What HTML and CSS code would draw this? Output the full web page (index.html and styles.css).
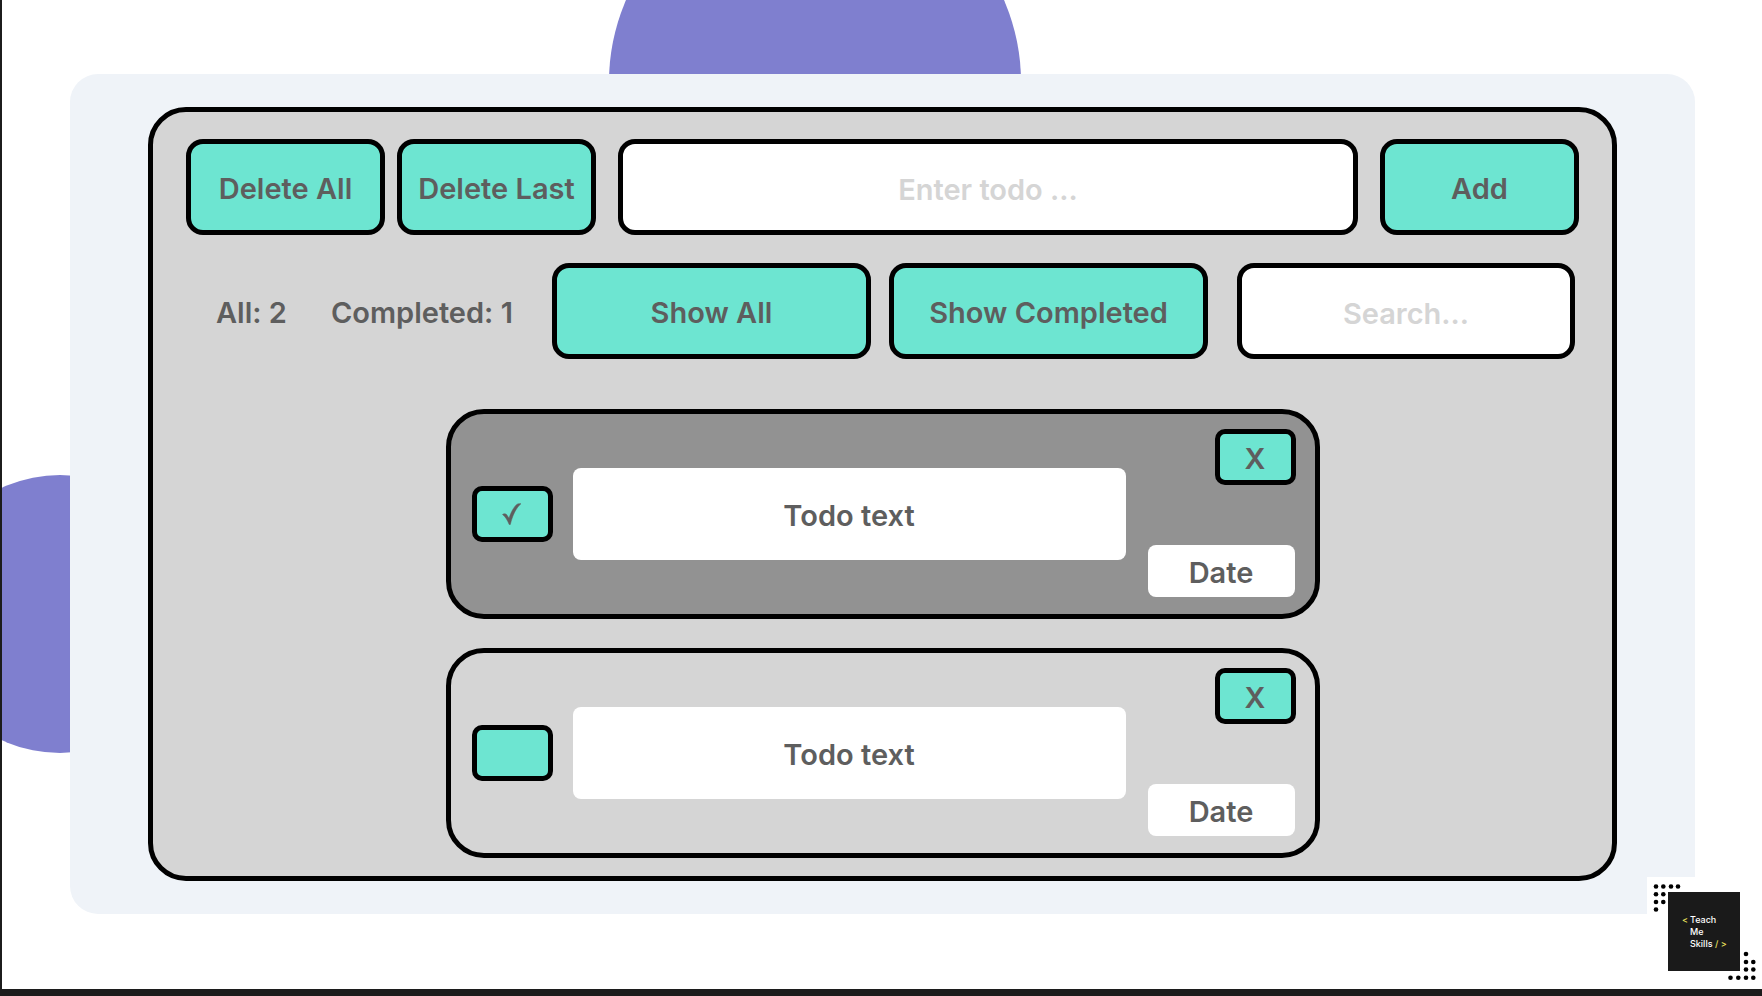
FILE: index.html
```html
<!DOCTYPE html>
<html lang="en">
<head>
<meta charset="utf-8">
<title>Todo</title>
<link rel="stylesheet" href="styles.css">
</head>
<body>
<main class="slide">
  <div class="circle circle-top"></div>
  <div class="circle circle-left"></div>
  <div class="panel">
    <section class="board">
      <form class="row create">
        <div class="pair">
          <button class="btn" type="button">Delete All</button>
          <button class="btn" type="button">Delete Last</button>
        </div>
        <input class="field" type="text" placeholder="Enter todo ..." aria-label="Enter todo">
        <button class="btn" type="button">Add</button>
      </form>
      <div class="row filters">
        <div class="counts">
          <span>All: 2</span>
          <span>Completed: 1</span>
        </div>
        <div class="views">
          <button class="btn" type="button">Show All</button>
          <button class="btn" type="button">Show Completed</button>
        </div>
        <input class="field search" type="text" placeholder="Search..." aria-label="Search">
      </div>
      <ul class="todos">
        <li class="todo done">
          <label class="check">
            <input type="checkbox" checked aria-label="Completed">
            <svg class="tick" viewBox="0 0 20 22" aria-hidden="true"><path d="M.5 11.5C1.6 10.4 3.5 10.4 4.6 11.6L7 15.2C9.300 8.500 11.800 4.300 14.200 1.900C15.400.7 17 .5 19 .7C14.200 4.600 10.400 12.500 8.300 21.500H7.200C5.800 18 3.500 13.500.5 11.500Z"/></svg>
          </label>
          <p class="text">Todo text</p>
          <div class="side">
            <button class="btn small" type="button" aria-label="Delete">X</button>
            <span class="date">Date</span>
          </div>
        </li>
        <li class="todo">
          <label class="check">
            <input type="checkbox" aria-label="Completed">
          </label>
          <p class="text">Todo text</p>
          <div class="side">
            <button class="btn small" type="button" aria-label="Delete">X</button>
            <span class="date">Date</span>
          </div>
        </li>
      </ul>
    </section>
  </div>
  <div class="brand">
    <svg class="dots" viewBox="0 0 115 112" aria-hidden="true">
      <g>
        <circle cx="9" cy="9.500" r="2.300"/><circle cx="16.300" cy="9.500" r="2.300"/><circle cx="24" cy="9.500" r="2.300"/><circle cx="31" cy="9.500" r="2.300"/>
        <circle cx="9" cy="17.300" r="2.300"/><circle cx="16.300" cy="17.300" r="2.300"/>
        <circle cx="9" cy="25" r="2.300"/><circle cx="16.300" cy="25" r="2.300"/>
        <circle cx="9" cy="32.500" r="2.300"/>
        <circle cx="99" cy="77" r="2.300"/>
        <circle cx="99" cy="85" r="2.300"/><circle cx="106.300" cy="85" r="2.300"/>
        <circle cx="99" cy="92.500" r="2.300"/><circle cx="106.300" cy="92.500" r="2.300"/>
        <circle cx="83.500" cy="100.700" r="2.300"/><circle cx="91.300" cy="100.700" r="2.300"/><circle cx="99" cy="100.700" r="2.300"/><circle cx="106.300" cy="100.700" r="2.300"/>
      </g>
    </svg>
    <div class="plate">
      <span class="mark">&lt;</span><span>Teach</span>
      <span class="line">Me</span>
      <span class="line">Skills <span class="mark">/ &gt;</span></span>
    </div>
  </div>
</main>
</body>
</html>
```

FILE: styles.css
```css
* {
  box-sizing: border-box;
}

body {
  margin: 0;
  font: 600 29px/36px Inter, "Liberation Sans", sans-serif;
  color: #5e5e5e;
}

.slide {
  position: relative;
  display: flex;
  min-height: 100vh;
  padding: 74px 67px 75px 68px;
  overflow: hidden;
  background: #fff;
  border-left: 2px solid #1c1c1c;
  border-bottom: 7px solid #1c1c1c;
}

.circle {
  position: absolute;
  border-radius: 50%;
  background: #7f7fcf;
}

.circle-top {
  top: -124px;
  left: 607px;
  width: 412px;
  height: 412px;
}

.circle-left {
  top: 475px;
  left: -81px;
  width: 278px;
  height: 278px;
}

.panel {
  position: relative;
  display: flex;
  flex: 1;
  padding: 33px 78px;
  border-radius: 28px;
  background: #eff3f8;
}

.board {
  flex: 1;
  padding: 27px 33px 18px;
  border: 5px solid #000;
  border-radius: 38px;
  background: #d5d5d5;
}

.row {
  display: flex;
  align-items: center;
}

.create {
  gap: 22px;
}

.pair {
  display: flex;
  gap: 12px;
}

.filters {
  margin-top: 28px;
}

.btn,
.field {
  height: 96px;
  padding: 4px 0 0;
  border: 5px solid #000;
  border-radius: 17px;
  font: inherit;
  color: inherit;
}

.btn {
  width: 199px;
  background: #6de5d1;
  white-space: nowrap;
}

.field {
  flex: 1;
  min-width: 0;
  background: #fff;
  text-align: center;
}

.field::placeholder {
  color: #d5d5d5;
  opacity: 1;
}

.counts {
  display: flex;
  flex: 1;
  gap: 44px;
  padding: 4px 0 0 30px;
  white-space: nowrap;
}

.views {
  display: flex;
  gap: 18px;
}

.views .btn {
  width: 319px;
}

.search {
  flex: none;
  width: 338px;
  margin: 0 4px 0 29px;
}

.todos {
  display: grid;
  gap: 29px;
  max-width: 874px;
  margin: 50px auto 0;
  padding: 0;
  list-style: none;
}

.todo {
  display: flex;
  align-items: center;
  height: 210px;
  padding: 0 19px 0 21px;
  border: 5px solid #000;
  border-radius: 38px;
}

.done {
  background: #929292;
}

.check {
  display: grid;
  place-items: center;
  margin-right: 20px;
}

.check input,
.tick {
  grid-area: 1 / 1;
}

.check input,
.small {
  width: 81px;
  height: 56px;
  border: 5px solid #000;
  border-radius: 10px;
  background: #6de5d1;
}

.check input {
  margin: 0;
  appearance: none;
}

.tick {
  width: 20px;
  height: 22px;
  fill: #5e5e5e;
  stroke: #5e5e5e;
  stroke-width: 0.5;
}

.text,
.date {
  padding-top: 4px;
  border-radius: 8px;
  background: #fff;
  text-align: center;
}

.text {
  flex: 1;
  margin: 0;
  line-height: 88px;
}

.side {
  display: flex;
  flex-direction: column;
  align-items: flex-end;
  justify-content: space-between;
  align-self: stretch;
  width: 148px;
  margin-left: 22px;
  padding: 15px 0 17px;
}

.date {
  width: 147px;
  margin-right: 1px;
  line-height: 48px;
}

.brand {
  position: absolute;
  right: 0;
  bottom: 0;
  width: 115px;
  height: 112px;
  padding: 15px 22px 18px 21px;
  background: #fff;
}

.dots {
  position: absolute;
  inset: 0;
}

.plate {
  display: grid;
  grid-template-columns: 8px 1fr;
  align-content: center;
  height: 79px;
  padding-left: 14px;
  background: #1a1a1a;
  color: #fff;
  font: 500 9px/12px Inter, "Liberation Sans", sans-serif;
  white-space: nowrap;
}

.line {
  grid-column: 2;
}

.mark {
  color: #e8e05a;
}
```
